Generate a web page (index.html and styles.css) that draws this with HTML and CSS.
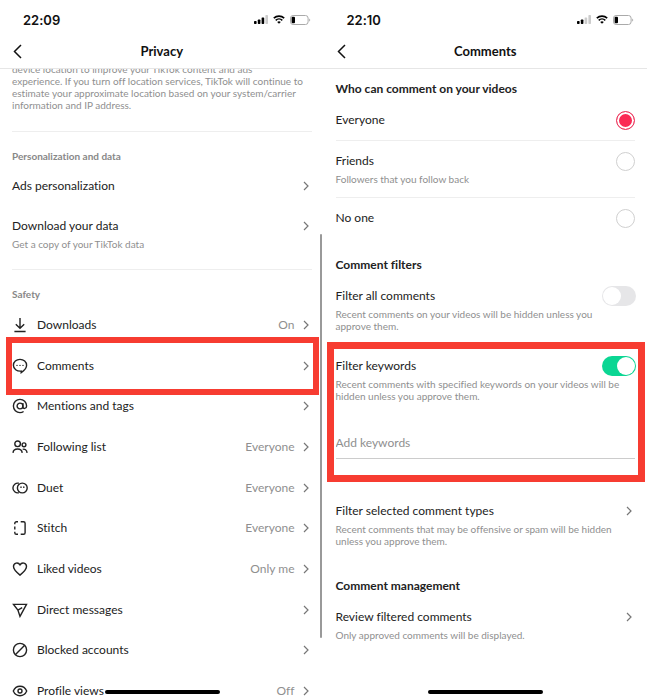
FILE: index.html
```html
<!DOCTYPE html>
<html lang="en">
  <head>
    <meta charset="utf-8" />
    <meta name="viewport" content="width=device-width, initial-scale=1" />
    <title>Privacy settings</title>
    <link rel="stylesheet" href="styles.css">
  </head>
  <body>
    <!-- shared icons -->
    <svg class="sprite" aria-hidden="true">
      <symbol id="chevron" viewBox="0 0 6 10"><path d="M1 1l4 4-4 4" /></symbol>
      <symbol id="back" viewBox="0 0 9 15"><path d="M8 1L1.5 7.5 8 14" /></symbol>
      <symbol id="wifi" viewBox="0 0 12 9">
        <path d="M.8 3.2a7.6 7.6 0 0 1 10.4 0M2.7 5.3a4.8 4.8 0 0 1 6.6 0" fill="none" stroke="#000" stroke-width="1.6" />
        <path d="M6 8.8L4.2 7a2.6 2.6 0 0 1 3.6 0z" />
      </symbol>
      <symbol id="battery" viewBox="0 0 21 10">
        <rect x=".5" y=".5" width="17.6" height="9" rx="2.6" fill="none" stroke="#aaa" />
        <rect x="1.6" y="1.8" width="3.4" height="6.4" rx="1" />
        <path d="M19.2 3.4v3.2c1.4-.5 1.4-2.7 0-3.2z" fill="#aaa" />
      </symbol>
    </svg>

    <main class="screen">
      <div class="status">
        <span class="time">22:09</span>
        <span class="signals">
          <svg width="14" height="9" viewBox="0 0 14 9">
            <rect x="0" y="6" width="2.6" height="3" rx=".7" />
            <rect x="3.8" y="4.6" width="2.6" height="4.4" rx=".7" />
            <rect x="7.6" y="2.4" width="2.6" height="6.6" rx=".7" />
            <rect x="11.4" y="0" width="2.6" height="9" rx=".7" fill="#ccc" />
          </svg>
          <svg width="12" height="9"><use href="#wifi" /></svg>
          <svg width="21" height="10"><use href="#battery" /></svg>
        </span>
      </div>
      <header class="navbar">
        <button class="back" type="button" aria-label="Back"><svg width="9" height="15"><use href="#back" /></svg></button>
        <h1>Privacy</h1>
      </header>

      <div class="content">
        <p class="note clipped">device location to improve your TikTok content and ads experience. If you turn off location services, TikTok will continue to estimate your approximate location based on your system/carrier information and IP address.</p>

        <section class="group">
          <h2 class="caption">Personalization and data</h2>
          <a class="item" href="#">
            <span class="line"><span class="label">Ads personalization</span><svg class="chevron"><use href="#chevron" /></svg></span>
          </a>
          <a class="item" href="#">
            <span class="line"><span class="label">Download your data</span><svg class="chevron"><use href="#chevron" /></svg></span>
            <span class="note">Get a copy of your TikTok data</span>
          </a>
        </section>

        <section class="group">
          <h2 class="caption">Safety</h2>
          <a class="row" href="#">
            <svg class="icon" viewBox="0 0 16 16"><path d="M8 1v10M3.8 7.2L8 11.3l4.2-4.1M2.4 14.5h11.2" /></svg>
            <span class="label">Downloads</span><span class="value">On</span><svg class="chevron"><use href="#chevron" /></svg>
          </a>
          <a class="row marked" href="#">
            <svg class="icon" viewBox="0 0 16 16"><path d="M8 1.4c3.7 0 6.6 2.5 6.6 5.9 0 3.6-3 5.8-5.4 7.4v-1.6c-4.3.4-7.8-2-7.8-5.8 0-3.4 2.9-5.9 6.6-5.9z" /><path class="dots" d="M5 7.4h.01M8 7.4h.01M11 7.4h.01" /></svg>
            <span class="label">Comments</span><svg class="chevron"><use href="#chevron" /></svg>
          </a>
          <a class="row" href="#">
            <svg class="icon" viewBox="0 0 16 16"><circle cx="8" cy="8" r="2.9" /><path d="M10.9 5v3.8c0 2.4 3.7 2.2 3.7-.8A6.6 6.6 0 1 0 8 14.6c1.5 0 2.6-.4 3.6-1.1" /></svg>
            <span class="label">Mentions and tags</span><svg class="chevron"><use href="#chevron" /></svg>
          </a>
          <a class="row" href="#">
            <svg class="icon" viewBox="0 0 16 16"><circle cx="5.6" cy="4.8" r="2.8" /><circle cx="12" cy="5.8" r="1.9" /><path d="M1 13.9c.4-5.2 8.8-5.2 9.2 0M10.7 10.4c2-.8 4.1.5 4.4 3.5" /></svg>
            <span class="label">Following list</span><span class="value">Everyone</span><svg class="chevron"><use href="#chevron" /></svg>
          </a>
          <a class="row" href="#">
            <svg class="icon" viewBox="0 0 16 16"><circle cx="10.3" cy="8" r="4.9" /><path d="M6.8 3.2A4.9 4.9 0 1 0 6.8 12.8" /><path class="dots" d="M9 7v.4M11.8 7v.4" /></svg>
            <span class="label">Duet</span><span class="value">Everyone</span><svg class="chevron"><use href="#chevron" /></svg>
          </a>
          <a class="row" href="#">
            <svg class="icon" viewBox="0 0 16 16"><path d="M8.7 1.7h2.8a1.6 1.6 0 0 1 1.6 1.6v9.4a1.6 1.6 0 0 1-1.6 1.6H8.7M6 1.7H4.4a1.6 1.6 0 0 0-1.6 1.6v1M2.8 6.4v3.2M2.8 11.7v1a1.6 1.6 0 0 0 1.6 1.6H6" /></svg>
            <span class="label">Stitch</span><span class="value">Everyone</span><svg class="chevron"><use href="#chevron" /></svg>
          </a>
          <a class="row" href="#">
            <svg class="icon" viewBox="0 0 16 16"><path d="M8 14.1C5 11.7 1.5 9 1.5 5.6c0-3.9 4.7-4.8 6.5-1.7 1.8-3.1 6.5-2.2 6.5 1.7C14.5 9 11 11.7 8 14.1z" /></svg>
            <span class="label">Liked videos</span><span class="value">Only me</span><svg class="chevron"><use href="#chevron" /></svg>
          </a>
          <a class="row" href="#">
            <svg class="icon" viewBox="0 0 16 16"><path d="M1.5 2.4h13L8 14.4 5.9 8.1zM5.9 8.1l4.3-2.4" /></svg>
            <span class="label">Direct messages</span><svg class="chevron"><use href="#chevron" /></svg>
          </a>
          <a class="row" href="#">
            <svg class="icon" viewBox="0 0 16 16"><circle cx="8" cy="8" r="6.6" /><path d="M3.3 12.7l9.4-9.4" /></svg>
            <span class="label">Blocked accounts</span><svg class="chevron"><use href="#chevron" /></svg>
          </a>
          <a class="row" href="#">
            <svg class="icon" viewBox="0 0 16 16"><path d="M1.3 8C4 1.7 12 1.7 14.7 8 12 14.3 4 14.3 1.3 8z" /><circle cx="8" cy="8" r="2" /></svg>
            <span class="label">Profile views</span><span class="value">Off</span><svg class="chevron"><use href="#chevron" /></svg>
          </a>
        </section>
      </div>
      <div class="scrollbar"></div>
      <div class="home-bar"></div>
    </main>

    <main class="screen">
      <div class="status">
        <span class="time">22:10</span>
        <span class="signals">
          <svg width="14" height="9" viewBox="0 0 14 9">
            <rect x="0" y="6" width="2.6" height="3" rx=".7" />
            <rect x="3.8" y="4.6" width="2.6" height="4.4" rx=".7" />
            <rect x="7.6" y="2.4" width="2.6" height="6.6" rx=".7" fill="#ccc" />
            <rect x="11.4" y="0" width="2.6" height="9" rx=".7" fill="#ccc" />
          </svg>
          <svg width="12" height="9"><use href="#wifi" /></svg>
          <svg width="21" height="10"><use href="#battery" /></svg>
        </span>
      </div>
      <header class="navbar">
        <button class="back" type="button" aria-label="Back"><svg width="9" height="15"><use href="#back" /></svg></button>
        <h1>Comments</h1>
      </header>

      <div class="content">
        <section class="first">
          <h2 class="title">Who can comment on your videos</h2>
          <label class="item ruled">
            <span class="line"><span class="label">Everyone</span><input class="radio" type="radio" name="who" checked></span>
          </label>
          <label class="item ruled">
            <span class="line"><span class="label">Friends</span><input class="radio" type="radio" name="who"></span>
            <span class="note">Followers that you follow back</span>
          </label>
          <label class="item">
            <span class="line"><span class="label">No one</span><input class="radio" type="radio" name="who"></span>
          </label>
        </section>

        <section>
          <h2 class="title">Comment filters</h2>
          <label class="item">
            <span class="line"><span class="label">Filter all comments</span><input class="switch" type="checkbox"></span>
            <span class="note">Recent comments on your videos will be hidden unless you approve them.</span>
          </label>
          <div class="keywords marked">
            <label class="item">
              <span class="line"><span class="label">Filter keywords</span><input class="switch" type="checkbox" checked></span>
              <span class="note">Recent comments with specified keywords on your videos will be hidden unless you approve them.</span>
            </label>
            <input class="field" type="text" placeholder="Add keywords" aria-label="Add keywords">
          </div>
          <a class="item" href="#">
            <span class="line"><span class="label">Filter selected comment types</span><svg class="chevron"><use href="#chevron" /></svg></span>
            <span class="note">Recent comments that may be offensive or spam will be hidden unless you approve them.</span>
          </a>
        </section>

        <section>
          <h2 class="title">Comment management</h2>
          <a class="item" href="#">
            <span class="line"><span class="label">Review filtered comments</span><svg class="chevron"><use href="#chevron" /></svg></span>
            <span class="note">Only approved comments will be displayed.</span>
          </a>
        </section>
      </div>
      <div class="home-bar"></div>
    </main>
  </body>
</html>
```

FILE: styles.css
```css
* {
  box-sizing: border-box;
}

body {
  display: grid;
  grid-template-columns: 1fr 1fr;
  height: 100vh;
  margin: 0;
  overflow: hidden;
  background-color: #fff;
  color: #222;
  font-family: Lato, "Liberation Sans", sans-serif;
  font-size: 12px;
  line-height: 16px;
  font-variant-ligatures: none;
}

h1, h2, p {
  margin: 0;
}

a {
  color: inherit;
  text-decoration: none;
}

svg {
  flex: none;
}

.sprite {
  position: absolute;
  width: 0;
  height: 0;
}

.screen {
  position: relative;
  display: flex;
  flex-direction: column;
  height: 100vh;
  min-width: 0;
}

/* top bars */
.status {
  display: flex;
  align-items: center;
  justify-content: space-between;
  height: 36px;
  padding: 3px 13px 0 23px;
}

.time {
  color: #111;
  font-family: Inter, sans-serif;
  font-size: 13px;
  font-weight: 600;
}

.signals {
  display: flex;
  align-items: center;
  gap: 5px;
}

.navbar {
  display: grid;
  grid-template-columns: 24px 1fr 24px;
  align-items: center;
  height: 33px;
  padding: 0 12px 2px;
  border-bottom: 1px solid #e6e6e6;
}

.navbar h1 {
  color: #111;
  font-size: 13px;
  text-align: center;
}

.back {
  display: flex;
  padding: 0 1px;
  border: 0;
  background: none;
}

.back svg {
  fill: none;
  stroke: #111;
  stroke-width: 1.5;
}

.content {
  flex: 1;
  padding: 0 12px;
  overflow: hidden;
}

/* text */
.note {
  display: block;
  padding-right: 8px;
  color: #8f8f8f;
  font-size: 10px;
  line-height: 12px;
}

.clipped {
  margin-top: -6px;
  padding-bottom: 20px;
}

.caption {
  padding: 18px 0 4px;
  color: #888;
  font-size: 10px;
  line-height: 12px;
}

.title {
  padding: 19px 0 3px;
  font-size: 12px;
}

.first .title {
  padding-top: 12px;
}

.group {
  padding-bottom: 7px;
  border-top: 1px solid #eee;
}

/* settings with an optional note below */
.item {
  display: block;
  padding: 12px 0;
}

.item .note {
  margin-top: 4px;
}

.line {
  display: flex;
  align-items: center;
  height: 16px;
}

.label {
  flex: 1;
}

.ruled {
  border-bottom: 1px solid #eee;
}

/* settings with an icon */
.row {
  display: flex;
  align-items: center;
  height: 41px;
}

.row:nth-of-type(3n) {
  height: 40px;
}

.icon {
  width: 16px;
  height: 16px;
  margin-right: 9px;
  fill: none;
  stroke: #222;
  stroke-width: 1.4;
}

.icon .dots {
  stroke-linecap: round;
}

.value {
  margin-right: 8px;
  color: #8f8f8f;
}

.chevron {
  width: 6px;
  height: 10px;
  margin-right: 3px;
  fill: none;
  stroke: #777;
  stroke-width: 1.2;
}

/* controls */
.radio {
  appearance: none;
  width: 19px;
  height: 19px;
  margin: 0;
  border: 1px solid #d0d0d0;
  border-radius: 50%;
}

.radio:checked {
  border: 1px solid #ea3a60;
  background-color: #fb2a55;
  box-shadow: inset 0 0 0 2px #fff;
}

.switch {
  appearance: none;
  display: flex;
  width: 34px;
  height: 20px;
  margin: 0 -1px 0 0;
  padding: 1px;
  border-radius: 10px;
  background-color: #e6e6e8;
}

.switch::before {
  content: "";
  width: 18px;
  height: 18px;
  border-radius: 50%;
  background-color: #fff;
}

.switch:checked {
  justify-content: flex-end;
  background-color: #0bd693;
}

.keywords {
  margin: 2px 0 32px;
}

.field {
  display: block;
  width: 100%;
  height: 45px;
  padding: 12px 0 0;
  border: 0;
  border-bottom: 1px solid #ccc;
  background: none;
  font: inherit;
}

.field::placeholder {
  color: #8f8f8f;
}

/* red frame round a setting */
.marked {
  position: relative;
}

.marked::after {
  content: "";
  position: absolute;
  inset: -8px -7px -9px -6px;
  border: 6px solid #f73c31;
  pointer-events: none;
}

.keywords::after {
  inset: -4px -10px -23px -9px;
  border-width: 7px;
}

/* overlays */
.scrollbar {
  position: absolute;
  top: 234px;
  right: 2px;
  width: 2px;
  height: 404px;
  border-radius: 1px;
  background-color: #999;
}

.home-bar {
  position: absolute;
  bottom: 6px;
  left: 50%;
  width: 115px;
  height: 4px;
  margin-left: -57px;
  border-radius: 2px;
  background-color: #000;
}
```
